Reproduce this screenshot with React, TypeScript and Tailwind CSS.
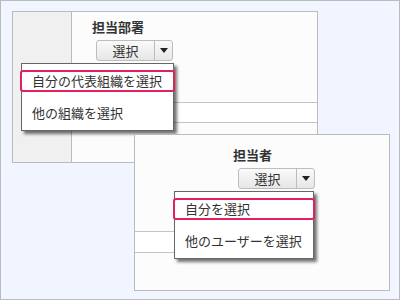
import React from 'react';

const font = { fontFamily: '"Noto Sans CJK JP", "Noto Sans", sans-serif' };

const SplitButton = () => (
  <div className="flex h-[21px] w-[77px] rounded-[3px] border border-[#bdbdbd] bg-gradient-to-b from-[#fafafa] to-[#e6e6e6] text-[13px] leading-[19px] text-[#333]">
    <span className="flex w-[58px] items-center justify-center border-r border-[#bdbdbd]">選択</span>
    <span className="flex flex-1 items-center justify-center">
      <svg width="8" height="5" viewBox="0 0 8 5"><path d="M0 0h8L4 5z" fill="#222" /></svg>
    </span>
  </div>
);

const Menu = ({ items, className }: { items: string[]; className: string }) => (
  <div className={`absolute border border-[#666] bg-white shadow-[3px_3px_3px_rgba(0,0,0,0.55)] ${className}`}>
    <div className="mx-[-2px] mt-[6px] flex h-[22px] items-center rounded-[3px] border-2 border-[#e0205f] pl-[10px] text-[13px] text-[#333]">
      {items[0]}
    </div>
    <div className="flex h-[42px] items-center pl-[10px] text-[13px] text-[#333]">{items[1]}</div>
  </div>
);

export default function App() {
  return (
    <div style={font} className="relative h-[300px] w-[400px] overflow-hidden border border-[#bbb] bg-[#f0f5ff]">
      {/* panel 1 */}
      <div className="absolute left-[11px] top-[10px] flex h-[152px] w-[306px] border border-[#bbb]">
        <div className="w-[59px] border-r border-[#bbb] bg-[#f0f0f0]" />
        <div className="flex flex-1 flex-col bg-[#fcfcfc]">
          <div className="h-[90px] pl-[20px] pt-[5px]">
            <div className="text-[13px] font-bold leading-[20px] text-[#333]">担当部署</div>
            <div className="mt-[3px] pl-[4px]"><SplitButton /></div>
          </div>
          <div className="h-[21px] border-y border-[#c4c4c4] bg-white" />
          <div className="flex-1" />
        </div>
        <Menu className="left-[8px] top-[51px] h-[68px] w-[153px]" items={['自分の代表組織を選択', '他の組織を選択']} />
      </div>

      {/* panel 2 */}
      <div className="absolute left-[133px] top-[133px] flex h-[157px] w-[256px] flex-col border border-[#bbb] bg-[#fcfcfc]">
        <div className="h-[96px] pl-[98px] pt-[10px]">
          <div className="text-[13px] font-bold leading-[20px] text-[#333]">担当者</div>
          <div className="mt-[3px] pl-[5px]"><SplitButton /></div>
        </div>
        <div className="h-[22px] w-[160px] border-y border-[#c4c4c4] bg-white" />
        <div className="flex-1" />
        <Menu className="left-[39px] top-[56px] h-[68px] w-[140px]" items={['自分を選択', '他のユーザーを選択']} />
      </div>
    </div>
  );
}
